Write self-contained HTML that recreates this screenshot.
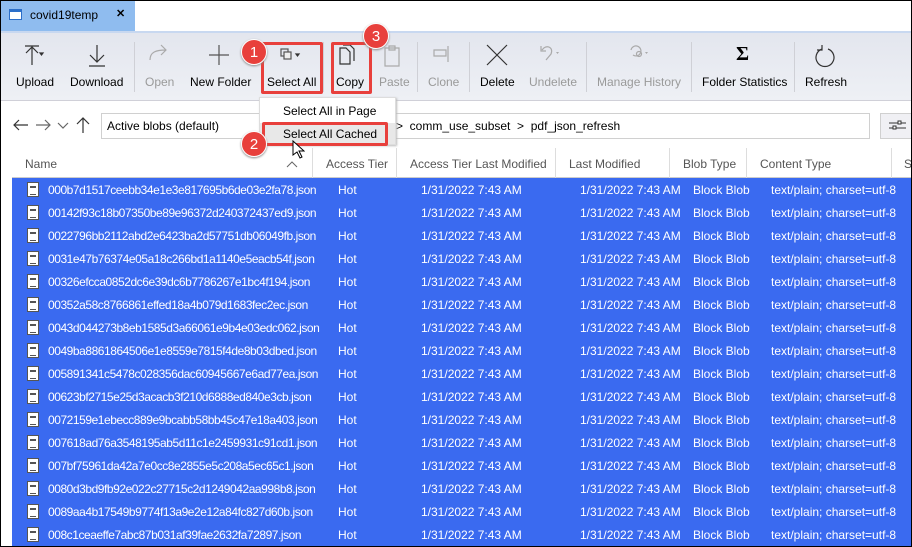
<!DOCTYPE html>
<html><head><style>
*{margin:0;padding:0;box-sizing:border-box}
body{width:912px;height:547px;overflow:hidden;background:#fff;font-family:"Liberation Sans",sans-serif;font-size:12px;color:#000;position:relative}
.abs{position:absolute;white-space:nowrap}
.frame{position:absolute;left:0;top:0;width:912px;height:547px;border:1px solid #000;pointer-events:none;z-index:50}
.tab{left:1px;top:1px;width:134px;height:30px;background:#8fbcef}
.tb{left:1px;top:31px;width:910px;height:70px;background:linear-gradient(#e3e6ee,#eef0f5);border-top:2px solid #c8d8f0;border-bottom:1px solid #d0d0d8}
.lbl{top:75px;font-size:12px}
.dis{color:#9a9a9a}
.sep{top:42px;width:1px;height:50px;background:#cfd0d6}
.red{border:3px solid #e8403c;border-radius:2px}
.badge{width:26px;height:26px;border-radius:50%;background:#e8403c;color:#fff;font-size:15px;text-align:center;line-height:26px;border:1.5px solid #fff;box-shadow:0 1px 2px #888}
.row{left:12px;width:900px;height:23px;background:#3a6af0;color:#fff}
.row span{position:absolute;top:5px}
.row span.nm{letter-spacing:-0.45px}
.hdr{top:157px;color:#555;font-size:12px}
.fi{position:absolute;left:15px;top:4px;width:12px;height:15px;background:#fff;border:1px solid #555}
.fi:after{content:"";position:absolute;left:2px;top:3px;width:6px;height:7px;border-top:1px solid #555;border-bottom:1px solid #555;box-shadow:inset 0 3px 0 -2px #555}
</style></head><body>
<div class="frame"></div>
<div class="abs tab"></div>
<div class="abs" style="left:9px;top:9px;width:13px;height:11px;border:1px solid #2c6fc9;border-top:3px solid #2c6fc9;background:#fff"></div>
<div class="abs" style="left:30px;top:8px;font-size:12px">covid19temp</div>
<div class="abs" style="left:116px;top:7px;font-size:11px;font-weight:bold">✕</div>
<div class="abs tb"></div>
<svg class="abs" style="left:0;top:40px" width="912" height="32" fill="none" stroke="#333" stroke-width="1.2">
<path d="M25 6h14M32 7v18M26 13l6-6 6 6"/><path d="M40 13l3 0l-1.5 2z" fill="#333"/>
<path d="M97 5v17M90 15l7 7 7-7M89 26h16"/>
<path d="M150 20c0-8 6-10 16-10M161 5l5 5-5 5" stroke="#aaa"/>
<path d="M219 5v20M209 15h20" stroke="#555"/>
<rect x="281" y="9" width="7" height="7" stroke="#555"/><rect x="284" y="12" width="7" height="7" stroke="#555" fill="#eee"/><path d="M296 14l3 0-1.5 2z" fill="#333"/>
<path d="M340 8h6l4 4v12h-10zM343 5h7l4 4v12" stroke="#333"/>
<path d="M385 8h14v18h-14zM389 6h6v4h-6z" stroke="#aaa"/>
<path d="M434 10h12v6h-12zM448 6v16" stroke="#aaa"/>
<path d="M487 5l20 20M507 5l-20 20" stroke="#333"/>
<path d="M542 10c4-6 12-3 9 4l-5 6M541 6v5h5" stroke="#aaa"/><path d="M556 12l3 0-1.5 2z" fill="#aaa" stroke="none"/>
<path d="M631 10a5 5 0 1 1 2 5" stroke="#aaa"/><circle cx="639" cy="14" r="2.5" stroke="#aaa"/><path d="M645 12l3 0-1.5 2z" fill="#aaa" stroke="none"/>
<path d="M822 9a9 9 0 1 0 6 0M822 5v5h-5" stroke="#333"/>
</svg>
<div class="abs" style="left:736px;top:43px;font-size:20px;font-weight:bold;font-family:'Liberation Serif',serif">Σ</div>
<div class="abs lbl" style="left:16px">Upload</div>
<div class="abs lbl" style="left:70px">Download</div>
<div class="abs sep" style="left:134px"></div>
<div class="abs lbl dis" style="left:145px">Open</div>
<div class="abs lbl" style="left:190px">New Folder</div>
<div class="abs lbl" style="left:267px">Select All</div>
<div class="abs sep" style="left:323px"></div>
<div class="abs lbl" style="left:336px">Copy</div>
<div class="abs lbl dis" style="left:379px">Paste</div>
<div class="abs sep" style="left:417px"></div>
<div class="abs lbl dis" style="left:428px">Clone</div>
<div class="abs sep" style="left:469px"></div>
<div class="abs lbl" style="left:480px">Delete</div>
<div class="abs lbl dis" style="left:529px">Undelete</div>
<div class="abs sep" style="left:586px"></div>
<div class="abs lbl dis" style="left:597px">Manage History</div>
<div class="abs sep" style="left:691px"></div>
<div class="abs lbl" style="left:702px">Folder Statistics</div>
<div class="abs sep" style="left:794px"></div>
<div class="abs lbl" style="left:805px">Refresh</div>
<svg class="abs" style="left:10px;top:115px" width="85" height="20" fill="none" stroke="#333" stroke-width="1.2">
<path d="M4 10h14M9 5l-5 5 5 5"/><path d="M26 10h14M35 5l5 5-5 5" stroke="#666"/><path d="M48 8l5 5 5-5" stroke="#666"/><path d="M73 3v15M67 9l6-6 6 6"/>
</svg>
<div class="abs" style="left:101px;top:113px;width:769px;height:26px;border:1px solid #d0d0d0;background:#fff"></div>
<div class="abs" style="left:107px;top:119px">Active blobs (default)</div>
<div class="abs" style="left:396px;top:119px">&gt;&nbsp; comm_use_subset &nbsp;&gt;&nbsp; pdf_json_refresh</div>
<div class="abs" style="left:880px;top:113px;width:32px;height:26px;border:1px solid #d0d0d0;background:#f0f0f4"></div>
<svg class="abs" style="left:888px;top:117px" width="20" height="18" fill="none" stroke="#333"><path d="M1 6h17M1 11h17"/><rect x="10" y="4" width="3" height="3" fill="#fff"/><rect x="5" y="9" width="3" height="3" fill="#fff"/></svg>
<div class="abs" style="left:12px;top:148px;width:900px;height:30px;border-bottom:1px solid #ccc"></div>
<div class="abs hdr" style="left:25px">Name</div>
<svg class="abs" style="left:286px;top:160px" width="12" height="8" fill="none" stroke="#666"><path d="M1 7l5-5 5 5"/></svg>
<div class="abs" style="left:312px;top:148px;width:1px;height:30px;background:#ddd"></div>
<div class="abs hdr" style="left:326px">Access Tier</div>
<div class="abs" style="left:396px;top:148px;width:1px;height:30px;background:#ddd"></div>
<div class="abs hdr" style="left:410px">Access Tier Last Modified</div>
<div class="abs" style="left:555px;top:148px;width:1px;height:30px;background:#ddd"></div>
<div class="abs hdr" style="left:569px">Last Modified</div>
<div class="abs" style="left:669px;top:148px;width:1px;height:30px;background:#ddd"></div>
<div class="abs hdr" style="left:683px">Blob Type</div>
<div class="abs" style="left:746px;top:148px;width:1px;height:30px;background:#ddd"></div>
<div class="abs hdr" style="left:760px">Content Type</div>
<div class="abs" style="left:891px;top:148px;width:1px;height:30px;background:#ddd"></div>
<div class="abs hdr" style="left:904px">S</div>
<div id="rows"></div>
<div class="abs" style="left:259px;top:97px;width:137px;height:48px;background:#fff;border:1px solid #ddd;box-shadow:1px 1px 2px #bbb"></div>
<div class="abs" style="left:283px;top:104px">Select All in Page</div>
<div class="abs" style="left:260px;top:123px;width:135px;height:21px;background:#e8e8e8"></div>
<div class="abs" style="left:283px;top:127px">Select All Cached</div>
<div class="abs red" style="left:262px;top:122px;width:126px;height:24px"></div>
<div class="abs red" style="left:261px;top:42px;width:62px;height:52px"></div>
<div class="abs red" style="left:331px;top:42px;width:41px;height:52px"></div>
<div class="abs badge" style="left:241px;top:39px">1</div>
<div class="abs badge" style="left:241px;top:131px">2</div>
<div class="abs badge" style="left:363px;top:23px">3</div>
<svg class="abs" style="left:291px;top:140px" width="14" height="20"><path d="M2 1v14l4-3 3 6 2-1-3-6h5z" fill="#fff" stroke="#000"/></svg>
<script>
var n=["000b7d1517ceebb34e1e3e817695b6de03e2fa78","00142f93c18b07350be89e96372d240372437ed9","0022796bb2112abd2e6423ba2d57751db06049fb","0031e47b76374e05a18c266bd1a1140e5eacb54f","00326efcca0852dc6e39dc6b7786267e1bc4f194","00352a58c8766861effed18a4b079d1683fec2ec","0043d044273b8eb1585d3a66061e9b4e03edc062","0049ba8861864506e1e8559e7815f4de8b03dbed","005891341c5478c028356dac60945667e6ad77ea","00623bf2715e25d3acacb3f210d6888ed840e3cb","0072159e1ebecc889e9bcabb58bb45c47e18a403","007618ad76a3548195ab5d11c1e2459931c91cd1","007bf75961da42a7e0cc8e2855e5c208a5ec65c1","0080d3bd9fb92e022c27715c2d1249042aa998b8","0089aa4b17549b9774f13a9e2e12a84fc827d60b","008c1ceaeffe7abc87b031af39fae2632fa72897"];
var h="";n.forEach(function(s,i){h+='<div class="abs row" style="top:'+(178+i*23)+'px"><div class="fi"></div><span class="nm" style="left:36px">'+s+'.json</span><span style="left:326px">Hot</span><span style="left:409px">1/31/2022 7:43 AM</span><span style="left:568px">1/31/2022 7:43 AM</span><span style="left:681px">Block Blob</span><span style="left:759px">text/plain; charset=utf-8</span></div>'});
document.getElementById("rows").innerHTML=h;
</script>
</body></html>
